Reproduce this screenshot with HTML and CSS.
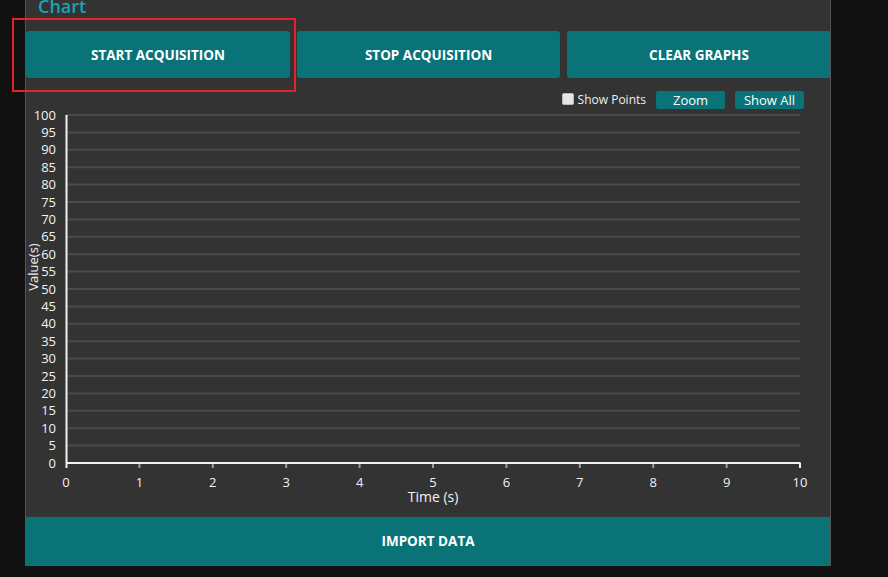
FILE: index.html
```html
<!DOCTYPE html>
<html>
<head>
<meta charset="utf-8">
<link rel="stylesheet" href="styles.css">
</head>
<body>
<div class="panel">
  <h2 class="title">Chart</h2>
  <div class="actions">
    <button class="btn">START ACQUISITION</button>
    <button class="btn">STOP ACQUISITION</button>
    <button class="btn">CLEAR GRAPHS</button>
  </div>
  <div class="controls">
    <label class="check"><span class="box"></span>Show Points</label>
    <button class="small">Zoom</button>
    <button class="small">Show All</button>
  </div>
  <svg class="chart" width="804" height="408" viewBox="0 0 804 408">
    <g class="grid">
      <line x1="40" x2="774" y1="6" y2="6"/>
      <line x1="40" x2="774" y1="23.4" y2="23.4"/>
      <line x1="40" x2="774" y1="40.8" y2="40.8"/>
      <line x1="40" x2="774" y1="58.2" y2="58.2"/>
      <line x1="40" x2="774" y1="75.6" y2="75.6"/>
      <line x1="40" x2="774" y1="93" y2="93"/>
      <line x1="40" x2="774" y1="110.4" y2="110.4"/>
      <line x1="40" x2="774" y1="127.8" y2="127.8"/>
      <line x1="40" x2="774" y1="145.2" y2="145.2"/>
      <line x1="40" x2="774" y1="162.6" y2="162.6"/>
      <line x1="40" x2="774" y1="180" y2="180"/>
      <line x1="40" x2="774" y1="197.4" y2="197.4"/>
      <line x1="40" x2="774" y1="214.8" y2="214.8"/>
      <line x1="40" x2="774" y1="232.2" y2="232.2"/>
      <line x1="40" x2="774" y1="249.6" y2="249.6"/>
      <line x1="40" x2="774" y1="267" y2="267"/>
      <line x1="40" x2="774" y1="284.4" y2="284.4"/>
      <line x1="40" x2="774" y1="301.8" y2="301.8"/>
      <line x1="40" x2="774" y1="319.2" y2="319.2"/>
      <line x1="40" x2="774" y1="336.6" y2="336.6"/>
    </g>
    <g class="ticks">
      <line x1="113.4" x2="113.4" y1="354" y2="359"/>
      <line x1="186.8" x2="186.8" y1="354" y2="359"/>
      <line x1="260.2" x2="260.2" y1="354" y2="359"/>
      <line x1="333.6" x2="333.6" y1="354" y2="359"/>
      <line x1="407" x2="407" y1="354" y2="359"/>
      <line x1="480.4" x2="480.4" y1="354" y2="359"/>
      <line x1="553.8" x2="553.8" y1="354" y2="359"/>
      <line x1="627.2" x2="627.2" y1="354" y2="359"/>
      <line x1="700.6" x2="700.6" y1="354" y2="359"/>
    </g>
    <g class="axis">
      <line x1="40.5" x2="40.5" y1="6" y2="359"/>
      <line x1="40" x2="774.5" y1="354" y2="354"/>
      <line x1="774" x2="774" y1="354" y2="359"/>
    </g>
    <g class="ylabels">
      <text x="30" y="10.5">100</text>
      <text x="30" y="27.9">95</text>
      <text x="30" y="45.3">90</text>
      <text x="30" y="62.7">85</text>
      <text x="30" y="80.1">80</text>
      <text x="30" y="97.5">75</text>
      <text x="30" y="114.9">70</text>
      <text x="30" y="132.3">65</text>
      <text x="30" y="149.7">60</text>
      <text x="30" y="167.1">55</text>
      <text x="30" y="184.5">50</text>
      <text x="30" y="201.9">45</text>
      <text x="30" y="219.3">40</text>
      <text x="30" y="236.7">35</text>
      <text x="30" y="254.1">30</text>
      <text x="30" y="271.5">25</text>
      <text x="30" y="288.9">20</text>
      <text x="30" y="306.3">15</text>
      <text x="30" y="323.7">10</text>
      <text x="30" y="341.1">5</text>
      <text x="30" y="358.5">0</text>
    </g>
    <g class="xlabels">
      <text x="40" y="378">0</text>
      <text x="113.4" y="378">1</text>
      <text x="186.8" y="378">2</text>
      <text x="260.2" y="378">3</text>
      <text x="333.6" y="378">4</text>
      <text x="407" y="378">5</text>
      <text x="480.4" y="378">6</text>
      <text x="553.8" y="378">7</text>
      <text x="627.2" y="378">8</text>
      <text x="700.6" y="378">9</text>
      <text x="774" y="378">10</text>
    </g>
    <text class="xtitle" x="407" y="393">Time (s)</text>
    <text class="ytitle" transform="translate(11.5 158) rotate(-90)">Value(s)</text>
  </svg>
  <button class="import">IMPORT DATA</button>
</div>
<div class="highlight"></div>
</body>
</html>
```
FILE: styles.css
```css
html, body {
  margin: 0;
  padding: 0;
  background: #111111;
  font-family: "Open Sans", "Noto Sans", sans-serif;
}
body {
  position: relative;
  height: 577px;
  overflow: hidden;
}
.panel {
  width: 804px;
  margin-left: 25px;
  border: 1px solid #555555;
  border-top: none;
  background: #333333;
  display: flex;
  flex-direction: column;
  overflow: hidden;
}
.title {
  margin: -3px 0 0 12px;
  font-size: 18px;
  line-height: 18px;
  font-weight: 600;
  color: #1ca3b3;
  height: 15px;
}
.actions {
  margin-top: 19px;
  display: grid;
  grid-template-columns: 264px 263px 264px;
  column-gap: 7px;
  padding-right: 1px;
}
.btn {
  height: 47px;
  border: none;
  border-radius: 3px;
  background: #097378;
  color: #ffffff;
  font-family: "Open Sans", "Noto Sans", sans-serif;
  font-weight: 700;
  font-size: 13.5px;
  padding: 0;
}
.controls {
  margin-top: 13px;
  height: 18px;
  display: flex;
  justify-content: flex-end;
  align-items: center;
  padding-right: 26px;
  gap: 10px;
}
.check {
  display: flex;
  align-items: center;
  gap: 4px;
  color: #eeeeee;
  font-size: 12px;
  position: relative;
  top: -1px;
}
.box {
  width: 10px;
  height: 10px;
  background: #e6e6e6;
  border: 1px solid #bbbbbb;
  border-radius: 2px;
}
.small {
  width: 69px;
  height: 18px;
  border: none;
  border-radius: 2px;
  background: #097378;
  color: #ffffff;
  font-family: "Open Sans", "Noto Sans", sans-serif;
  font-size: 13px;
  line-height: 18px;
  padding: 0;
}
.chart {
  display: block;
}
.grid line {
  stroke: #4a4a4a;
  stroke-width: 2;
}
.ticks line {
  stroke: #9a9a9a;
  stroke-width: 2;
}
.axis line {
  stroke: #f2f2f2;
  stroke-width: 2;
}
.ylabels text {
  fill: #f2f2f2;
  font-size: 13px;
  text-anchor: end;
  font-family: "Open Sans", "Noto Sans", sans-serif;
}
.xlabels text, .xtitle {
  fill: #f2f2f2;
  font-size: 13px;
  text-anchor: middle;
  font-family: "Open Sans", "Noto Sans", sans-serif;
}
.xtitle {
  font-size: 14px;
}
.ytitle {
  fill: #f2f2f2;
  font-size: 13px;
  text-anchor: middle;
  font-family: "Open Sans", "Noto Sans", sans-serif;
}
.import {
  height: 48px;
  border: none;
  background: #097378;
  color: #ffffff;
  font-family: "Open Sans", "Noto Sans", sans-serif;
  font-weight: 700;
  font-size: 13.5px;
  padding: 0;
}
.highlight {
  position: absolute;
  left: 12px;
  top: 18px;
  width: 280px;
  height: 70px;
  border: 2px solid #e3222c;
}
```
